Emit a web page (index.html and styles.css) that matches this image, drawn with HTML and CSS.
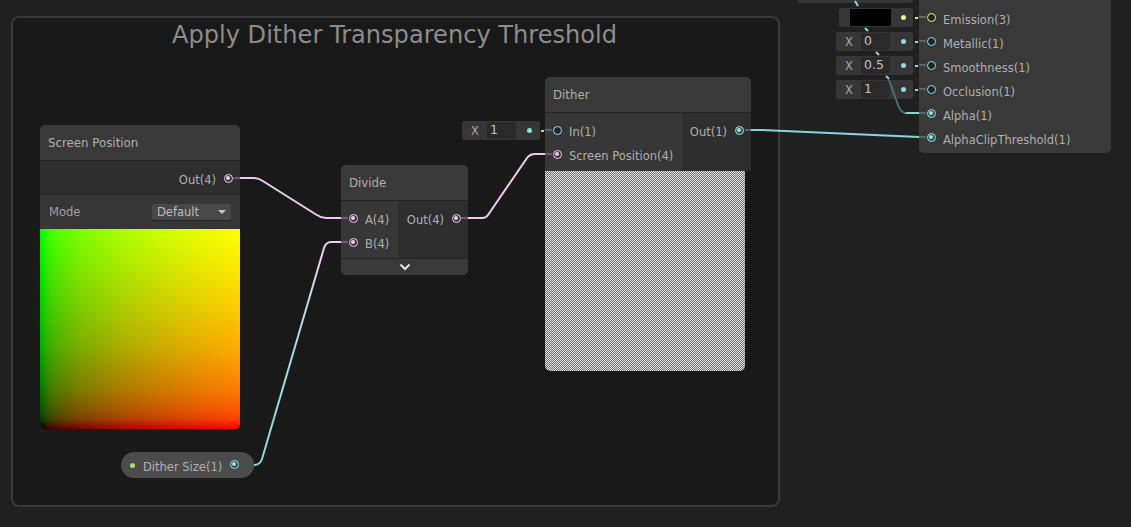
FILE: index.html
```html
<!DOCTYPE html>
<html lang="en">
<head>
<meta charset="utf-8">
<title>Shader Graph</title>
<link rel="stylesheet" href="styles.css">
</head>
<body>
<main class="canvas">
  <section class="group"><h1 class="group-title">Apply Dither Transparency Threshold</h1></section>

  <svg class="wires" width="1131" height="527" viewBox="0 0 1131 527" fill="none">
    <defs>
      <linearGradient id="sizeWire" gradientUnits="userSpaceOnUse" x1="340" y1="242" x2="254" y2="465">
        <stop offset="0" stop-color="#f0cdee"/>
        <stop offset=".12" stop-color="#e6d0ee"/>
        <stop offset=".45" stop-color="#a6dbe2"/>
        <stop offset="1" stop-color="#8adada"/>
      </linearGradient>
    </defs>
    <g class="wire-pink">
      <path d="M240 178H254Q258 178 262 180.500L316 214.500Q321 218 326 218H341"/>
      <path d="M468 218H482Q486 218 488 215L527 158Q530 154 535 154H545"/>
    </g>
    <path class="wire-size" d="M341 242H331Q326 242 324 248L262 459Q260 465 254 465"/>
    <g class="stub-pink">
      <path d="M233 178H240"/><path d="M341 218H348"/><path d="M341 242H348"/>
      <path d="M461 218H468"/><path d="M545 154H552"/>
    </g>
    <path class="wire-blue" d="M751 130H762L919 137"/>
    <path class="wire-blue" d="M904 113H919"/>
    <path class="wire-dim" d="M889 80L898 105Q901 113 906 113"/>
    <g class="dash-blue">
      <path d="M855 1L858 6"/><path d="M865 28L868 31"/><path d="M876 52L879 55"/><path d="M886 76L889 79"/>
    </g>
    <g class="stub-blue">
      <path d="M745 130H751"/><path d="M545 130H552"/>
      <path d="M919 41H926"/><path d="M919 65H926"/><path d="M919 89H926"/>
      <path d="M919 113H926"/><path d="M919 137H926"/>
    </g>
    <g class="dash-short">
      <path d="M541 131H544"/><path d="M915 42H918"/><path d="M915 66H918"/><path d="M915 90H918"/>
    </g>
    <path class="stub-yellow" d="M919 17H926"/>
    <path class="dash-yellow" d="M915 18H918"/>
  </svg>

  <article class="node node-position">
    <header class="node-title">Screen Position</header>
    <div class="row-out"><span>Out(4)</span><i class="port pink filled"></i></div>
    <div class="mode-row"><span>Mode</span><div class="select"><span>Default</span><b class="caret"></b></div></div>
    <div class="gradient"></div>
  </article>

  <article class="node node-divide">
    <header class="node-title">Divide</header>
    <div class="ports">
      <div class="inputs">
        <div class="port-row"><i class="port pink filled"></i><span>A(4)</span></div>
        <div class="port-row"><i class="port pink filled"></i><span>B(4)</span></div>
      </div>
      <div class="outputs">
        <div class="port-row"><span>Out(4)</span><i class="port pink filled"></i></div>
      </div>
    </div>
    <footer class="collapse">
      <svg width="12" height="8" viewBox="0 0 12 8" fill="none"><path d="M1.500 1.500L6 6L10.500 1.500" stroke="#e4e4e4" stroke-width="2"/></svg>
    </footer>
  </article>

  <article class="node node-dither">
    <header class="node-title">Dither</header>
    <div class="ports">
      <div class="inputs">
        <div class="port-row"><i class="port cyan"></i><span>In(1)</span></div>
        <div class="port-row"><i class="port pink filled"></i><span>Screen Position(4)</span></div>
      </div>
      <div class="outputs">
        <div class="port-row"><span>Out(1)</span><i class="port cyan filled"></i></div>
      </div>
    </div>
    <div class="dither-preview"></div>
  </article>

  <div class="field field-in"><span class="axis">X</span><span class="value">1</span><i class="dot cyan-dot"></i></div>

  <div class="pill"><i class="dot green-dot"></i><span>Dither Size(1)</span><i class="port cyan filled"></i></div>

  <article class="node node-master">
    <div class="port-row"><i class="port yellow"></i><span>Emission(3)</span></div>
    <div class="port-row"><i class="port cyan"></i><span>Metallic(1)</span></div>
    <div class="port-row"><i class="port cyan"></i><span>Smoothness(1)</span></div>
    <div class="port-row"><i class="port cyan"></i><span>Occlusion(1)</span></div>
    <div class="port-row"><i class="port cyan filled"></i><span>Alpha(1)</span></div>
    <div class="port-row"><i class="port cyan filled"></i><span>AlphaClipThreshold(1)</span></div>
  </article>

  <div class="field field-top"></div>
  <div class="field field-color"><span class="swatch"></span><i class="dot yellow-dot"></i></div>
  <div class="field field-m"><span class="axis">X</span><span class="value">0</span><i class="dot cyan-dot"></i></div>
  <div class="field field-s"><span class="axis">X</span><span class="value">0.5</span><i class="dot cyan-dot"></i></div>
  <div class="field field-o"><span class="axis">X</span><span class="value">1</span><i class="dot cyan-dot"></i></div>
</main>
</body>
</html>
```

FILE: styles.css
```css
* { box-sizing: border-box; }
html, body { margin: 0; padding: 0; }
body { background: #202020; overflow: hidden; }
.canvas {
  position: relative; width: 1131px; height: 527px; overflow: hidden;
  background: #202020;
  font-family: "DejaVu Sans", sans-serif; font-size: 11.500px; color: #b0b0b0;
}
.group {
  position: absolute; left: 11px; top: 16px; width: 769px; height: 491px;
  background: #191919; border: 2px solid #3a3a3a; border-radius: 8px;
}
.group-title {
  margin: 2px 0 0; padding-right: 2px; text-align: center; font-weight: 400; font-size: 24.100px; line-height: 30px;
  color: #8c8c8c;
}
.wires { position: absolute; left: 0; top: 0; z-index: 3; pointer-events: none; }
.wire-pink { stroke: #f0cdee; stroke-width: 2; }
.wire-size { stroke: url(#sizeWire); stroke-width: 2; }
.wire-blue { stroke: #86d8d8; stroke-width: 2; }
.wire-dim { stroke: #4f6e6e; stroke-width: 2; }
.dash-blue { stroke: #8fdcdc; stroke-width: 2; }
.stub-pink { stroke: #6b5c6b; stroke-width: 2; }
.stub-blue { stroke: #4e6a6a; stroke-width: 2; }
.stub-yellow { stroke: #6e6e48; stroke-width: 2; }
.dash-short { stroke: #8fdcdc; stroke-width: 2; }
.dash-yellow { stroke: #e6e68a; stroke-width: 2; }

.node {
  position: absolute; background: #2f2f2f; border-radius: 5px; overflow: hidden; z-index: 2;
}
.node-title {
  height: 36px; padding: 0 8px; display: flex; align-items: center; font-size: 11.800px;
  background: #393939; border-bottom: 1px solid #232323;
}
.node-position { left: 40px; top: 125px; width: 200px; height: 304px; }
.row-out {
  height: 34px; display: flex; align-items: center; justify-content: flex-end; gap: 8px;
  padding: 3px 7px 0 0; background: #2e2e2e; border-bottom: 1px solid #232323;
}
.row-out span { position: relative; top: 1px; }
.mode-row {
  height: 34px; display: flex; align-items: center; justify-content: space-between;
  padding: 0 9px; background: #363636; color: #a0a0a0;
}
.select {
  width: 79px; height: 16px; display: flex; align-items: center; justify-content: space-between;
  padding: 0 5px; background: #484848; border-radius: 2px; color: #bcbcbc; box-shadow: 0 1px 0 #252525;
}
.caret {
  width: 0; height: 0; border: 4px solid transparent; border-top: 4px solid #c8c8c8; border-bottom: 0;
}
.gradient {
  height: 200px;
  background-image:
    linear-gradient(to top, #000 0%, #004000 5%, #005900 10%, #007c00 20%, #00aa00 40%, #00cb00 60%, #00e700 80%, #00ff00 100%),
    linear-gradient(to right, #000 0%, #400000 5%, #590000 10%, #7c0000 20%, #aa0000 40%, #cb0000 60%, #e70000 80%, #ff0000 100%);
  background-blend-mode: screen;
}
.ports { display: flex; }
.inputs { background: #373737; padding-top: 6px; flex: none; }
.outputs { background: #2e2e2e; flex: 1; padding-top: 6px; }
.port-row { height: 24px; display: flex; align-items: center; gap: 7px; white-space: nowrap; }
.port-row span { position: relative; top: 1px; }
.outputs .port-row { justify-content: flex-end; gap: 8px; padding-right: 7px; }
.inputs .port-row { padding-left: 8px; }

.node-divide { left: 341px; top: 165px; width: 127px; height: 110px; }
.node-divide .ports { border-bottom: 1px solid #232323; }
.node-divide .inputs { width: 57px; height: 57px; }
.node-divide .outputs { height: 57px; }
.collapse { height: 16px; display: flex; align-items: center; justify-content: center; background: #393939; }

.node-dither { left: 545px; top: 77px; width: 206px; height: 294px; background: transparent; }
.node-dither .node-title { padding-top: 1px; }
.node-dither .ports { height: 58px; }
.node-dither .inputs { width: 137px; }
.dither-preview {
  width: 200px; height: 200px; border-radius: 0 0 5px 5px; background-color: #bdbdbd;
  background-image: conic-gradient(#757575 25%, #dedede 0 50%, #757575 0 75%, #dedede 0);
  background-size: 2px 2px;
}

.port {
  flex: none; position: relative; width: 9px; height: 9px; border-radius: 50%;
  background: #1d1d1d; border: 1.500px solid #ccc; display: block; top: -1px;
}
.port.pink { border-color: #f1cdf0; background: #3a2f3a; }
.port.cyan { border-color: #9fe3e3; background: #1d2626; }
.port.cyan.filled { background: #2f4a4a; }
.port.yellow { border-color: #eef09a; background: #23231a; }
.port.filled::after {
  content: ""; position: absolute; left: 1px; top: 1px; width: 4px; height: 4px; border-radius: 50%;
}
.port.pink.filled::after { background: #f1cdf0; }
.port.cyan.filled::after { background: #9fe3e3; }

.field {
  position: absolute; z-index: 1; display: flex; align-items: center; height: 19px;
  background: #363636; border-radius: 2px;
}
.axis { width: 24px; padding-left: 9px; color: #a8a8a8; flex: none; }
.value {
  width: 29px; height: 17px; margin-left: 1px; padding-left: 3px; background: #2a2a2a; border-radius: 3px;
  line-height: 16px; font-size: 12.500px; color: #c0c0c0; flex: none;
}
.dot { display: block; width: 5px; height: 5px; border-radius: 50%; flex: none; }
.cyan-dot { background: #8fdcdc; margin-left: 11px; }
.yellow-dot { background: #f0f08a; margin-left: 10px; }
.green-dot { background: #a8e060; }
.field-in { left: 462px; top: 121px; width: 78px; }
.field-top { left: 798px; top: -15px; width: 115px; height: 18px; }
.field-color { left: 839px; top: 8px; width: 74px; }
.swatch { width: 41px; height: 17px; margin-left: 11px; background: #000; flex: none; }
.field-m { left: 836px; top: 32px; width: 77px; }
.field-s { left: 836px; top: 56px; width: 77px; }
.field-o { left: 836px; top: 80px; width: 77px; }

.pill {
  position: absolute; left: 121px; top: 452px; width: 133px; height: 26px; z-index: 2;
  display: flex; align-items: center; padding: 0 15px 0 9px; border-radius: 13px; background: #4c4c4c;
}
.pill span { margin-left: 8px; flex: 1; position: relative; top: 2px; }

.node-master {
  left: 919px; top: -30px; width: 192px; height: 183px; background: #393939; padding: 36px 0 0 8px;
}
.node-master .port-row { height: 24px; }
.node-master .port-row span { top: 2px; }
```
